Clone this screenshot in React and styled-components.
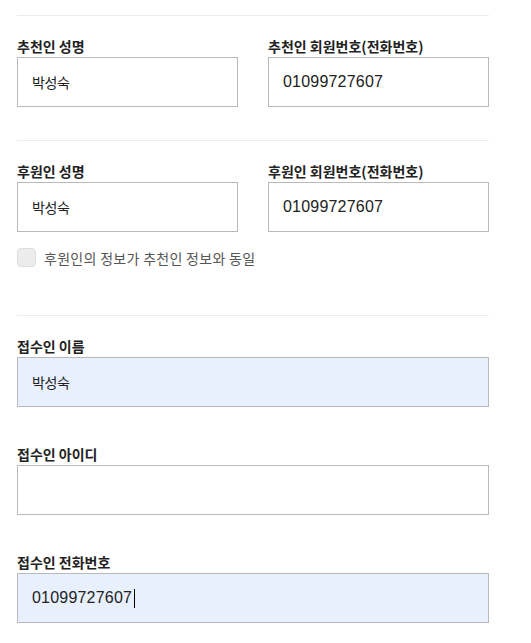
import React from 'react';
import styled, { createGlobalStyle } from 'styled-components';

const GlobalStyle = createGlobalStyle`
  body {
    margin: 0;
    background: #ffffff;
    font-family: "Liberation Sans", "Noto Sans CJK KR", sans-serif;
    color: #222;
  }
`;

const Page = styled.div`
  width: 472px;
  padding: 15px 17px 0;
`;

const Section = styled.section`
  border-top: 1px solid #ebebeb;
  padding-top: 20px;
  padding-bottom: ${(p) => p.$bottom || 0}px;
`;

const TwoCols = styled.div`
  display: grid;
  grid-template-columns: 1fr 1fr;
  column-gap: 30px;
`;

const Stack = styled.div`
  display: flex;
  flex-direction: column;
  gap: 37px;
`;

const Field = styled.div`
  display: flex;
  flex-direction: column;
  position: relative;
`;

const Label = styled.label`
  display: block;
  font-family: "Noto Sans CJK KR", sans-serif;
  font-size: 14px;
  font-weight: 700;
  line-height: 20px;
  letter-spacing: 0;
  color: #222;
  margin-bottom: 1px;
`;

const Input = styled.input`
  box-sizing: border-box;
  width: 100%;
  height: 50px;
  margin: 0;
  padding: 0 0 0 14px;
  border: 1px solid #b9b9b9;
  border-radius: 0;
  outline: none;
  background: ${(p) => (p.$filled ? '#e8f0fe' : '#ffffff')};
  color: #222;
  font-family: ${(p) =>
    p.$hangul ? '"Noto Sans CJK KR", sans-serif' : '"Liberation Sans", "Noto Sans CJK KR", sans-serif'};
  font-size: ${(p) => (p.$hangul ? '14px' : '16px')};
  letter-spacing: ${(p) => (p.$hangul ? '-0.4px' : '0.2px')};
`;

const Caret = styled.span`
  position: absolute;
  left: 117px;
  bottom: 15px;
  width: 1px;
  height: 19px;
  background: #000;
`;

const CheckRow = styled.label`
  display: flex;
  align-items: center;
  gap: 8px;
  margin-top: 16px;
  height: 19px;
  font-family: "Noto Sans CJK KR", sans-serif;
  font-size: 14px;
  letter-spacing: 0.3px;
  color: #555;
`;

const Check = styled.input`
  appearance: none;
  box-sizing: border-box;
  width: 19px;
  height: 19px;
  margin: 0;
  border: 1px solid #dedede;
  border-radius: 4px;
  background: #ececec;
`;

const noop = () => {};

export default function App() {
  return (
    <>
      <GlobalStyle />
      <Page>
        <Section $bottom={33}>
          <TwoCols>
            <Field>
              <Label>추천인 성명</Label>
              <Input $hangul value="박성숙" onChange={noop} />
            </Field>
            <Field>
              <Label>추천인 회원번호(전화번호)</Label>
              <Input value="01099727607" onChange={noop} />
            </Field>
          </TwoCols>
        </Section>

        <Section $bottom={48}>
          <TwoCols>
            <Field>
              <Label>후원인 성명</Label>
              <Input $hangul value="박성숙" onChange={noop} />
            </Field>
            <Field>
              <Label>후원인 회원번호(전화번호)</Label>
              <Input value="01099727607" onChange={noop} />
            </Field>
          </TwoCols>
          <CheckRow>
            <Check type="checkbox" />
            후원인의 정보가 추천인 정보와 동일
          </CheckRow>
        </Section>

        <Section>
          <Stack>
            <Field>
              <Label>접수인 이름</Label>
              <Input $hangul $filled value="박성숙" onChange={noop} />
            </Field>
            <Field>
              <Label>접수인 아이디</Label>
              <Input value="" onChange={noop} />
            </Field>
            <Field>
              <Label>접수인 전화번호</Label>
              <Input $filled value="01099727607" onChange={noop} />
              <Caret />
            </Field>
          </Stack>
        </Section>
      </Page>
    </>
  );
}
